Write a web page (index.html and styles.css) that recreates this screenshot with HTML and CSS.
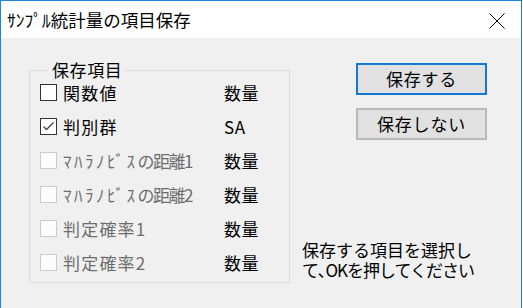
FILE: index.html
```html
<!DOCTYPE html>
<html lang="ja">
<head>
<meta charset="utf-8">
<title>サンプル統計量の項目保存</title>
<link rel="stylesheet" href="styles.css">
</head>
<body>
<div class="window">
  <div class="titlebar">
    <span class="title">ｻﾝﾌﾟﾙ統計量の項目保存</span>
    <svg class="close" width="16" height="16" viewBox="0 0 16 16" aria-label="閉じる">
      <path d="M0.5 0.5 L15.5 15.5 M15.5 0.5 L0.5 15.5" stroke="#000" stroke-width="1" fill="none"/>
    </svg>
  </div>
  <div class="client">
    <fieldset class="group">
      <legend class="legend">保存項目</legend>
      <div class="row">
        <span class="box"></span>
        <span class="label">関数値</span>
        <span class="value">数量</span>
      </div>
      <div class="row">
        <span class="box">
          <svg width="15" height="15" viewBox="0 0 15 15"><path d="M2.5 7.5 L5.5 10.5 L12.5 3.5" stroke="#444" stroke-width="1.3" fill="none"/></svg>
        </span>
        <span class="label">判別群</span>
        <span class="value">SA</span>
      </div>
      <div class="row disabled">
        <span class="box"></span>
        <span class="label"><span class="kana">ﾏﾊﾗﾉﾋﾞｽ</span><span class="tight">の距離1</span></span>
        <span class="value">数量</span>
      </div>
      <div class="row disabled">
        <span class="box"></span>
        <span class="label"><span class="kana">ﾏﾊﾗﾉﾋﾞｽ</span><span class="tight">の距離2</span></span>
        <span class="value">数量</span>
      </div>
      <div class="row disabled">
        <span class="box"></span>
        <span class="label">判定確率1</span>
        <span class="value">数量</span>
      </div>
      <div class="row disabled">
        <span class="box"></span>
        <span class="label">判定確率2</span>
        <span class="value">数量</span>
      </div>
    </fieldset>
    <div class="side">
      <button class="btn default">保存する</button>
      <button class="btn">保存しない</button>
      <p class="help">保存する項目を選択し<br><span class="help-line2">て､OKを押してください</span></p>
    </div>
  </div>
</div>
</body>
</html>
```

FILE: styles.css
```css
html, body {
  margin: 0;
  padding: 0;
  background: #ffffff;
}

body {
  width: 523px;
  height: 308px;
  overflow: hidden;
  font-family: "Noto Sans CJK JP", "Noto Sans", sans-serif;
  color: #000;
}

.window {
  width: 522px;
  height: 308px;
  box-sizing: border-box;
  border: 1px solid #1c85d8;
  border-bottom: none;
  display: flex;
  flex-direction: column;
}

.titlebar {
  height: 37px;
  flex: none;
  background: #ffffff;
  display: flex;
  align-items: center;
  padding-left: 6px;
}

.title {
  font-size: 17.5px;
  line-height: 20px;
  white-space: nowrap;
}

.close {
  margin-left: auto;
  margin-right: 16px;
  margin-top: 2px;
  display: block;
}

.client {
  flex: 1;
  background: #f0f0f0;
  display: flex;
  align-items: stretch;
}

.group {
  margin: 23px 0 0 28px;
  width: 261px;
  box-sizing: border-box;
  border: 1px solid #dcdcdc;
  padding: 5px 0 11px 10px;
  min-width: 0;
  align-self: flex-start;
  display: flex;
  flex-direction: column;
  gap: 17px;
}

.legend {
  font-size: 17px;
  line-height: 18px;
  padding: 0 3px;
  margin-left: 9px;
  letter-spacing: 0.6px;
}

.row {
  display: flex;
  align-items: center;
  height: 17px;
  font-size: 17px;
  line-height: 17px;
}

.box {
  width: 17px;
  height: 17px;
  box-sizing: border-box;
  border: 1px solid #333333;
  background: #ffffff;
  flex: none;
  display: flex;
  align-items: center;
  justify-content: center;
}

.label {
  width: 161px;
  margin-left: 6px;
  white-space: nowrap;
  letter-spacing: 1.2px;
}

.kana {
  letter-spacing: 2.5px;
}

.tight {
  letter-spacing: -1.5px;
}

.value {
  white-space: nowrap;
  letter-spacing: 0.5px;
}

.disabled .box {
  border-color: #cccccc;
  background: #fcfcfc;
}

.disabled .label {
  color: #6d6d6d;
}

.side {
  margin-left: 12px;
  padding-top: 25px;
  padding-bottom: 28px;
  display: flex;
  flex-direction: column;
  align-items: flex-start;
}

.btn {
  margin: 0 0 13px 54px;
  width: 131px;
  height: 32px;
  box-sizing: border-box;
  background: #e1e1e1;
  border: 2px solid #bababa;
  font-family: "Noto Sans CJK JP", "Noto Sans", sans-serif;
  font-size: 17px;
  line-height: 20px;
  letter-spacing: 0.8px;
  color: #000;
  padding: 0;
}

.btn.default {
  border-color: #1479d4;
}

.help {
  margin: auto 0 0 0;
  font-size: 17px;
  line-height: 20px;
  white-space: nowrap;
}

.help-line2 {
  letter-spacing: -1px;
}
```
